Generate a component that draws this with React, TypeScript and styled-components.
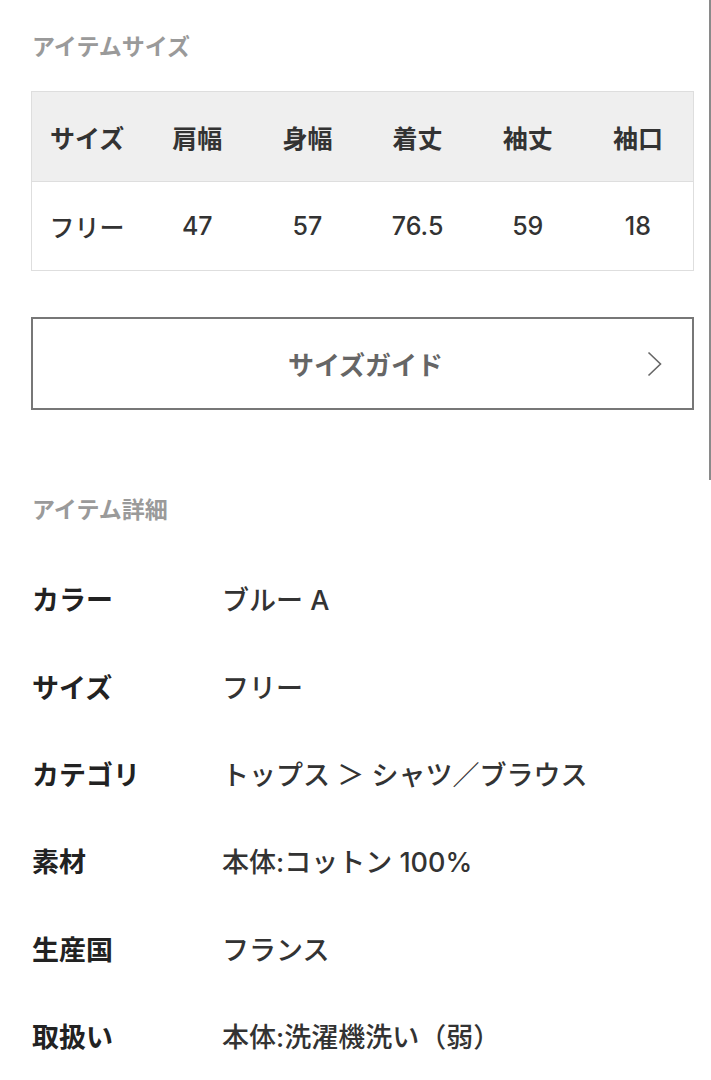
import React from 'react'
import styled, { createGlobalStyle } from 'styled-components'

const GlobalStyle = createGlobalStyle`
    body {
        margin: 0;
        background: #fff;
        font-family: Inter, "Noto Sans CJK JP", sans-serif;
        color: #333;
    }
`;

const sizeHeaders = ['サイズ', '肩幅', '身幅', '着丈', '袖丈', '袖口']
const sizeValues = ['フリー', '47', '57', '76.5', '59', '18']

const details = [
    { label: 'カラー', value: 'ブルー A' },
    { label: 'サイズ', value: 'フリー' },
    { label: 'カテゴリ', value: 'トップス ＞ シャツ／ブラウス' },
    { label: '素材', value: '本体:コットン 100%' },
    { label: '生産国', value: 'フランス' },
    { label: '取扱い', value: '本体:洗濯機洗い（弱）' },
]

const Chevron = () => (
    <svg width='15' height='26' viewBox='0 0 15 26' fill='none'>
        <polyline points='1.5,1.5 13.5,13 1.5,24.5' stroke='#666' strokeWidth='1.6' />
    </svg>
)

export default function App() {
    return (
        <Page>
            <GlobalStyle />
            <SizeSection>
                <SectionTitle>アイテムサイズ</SectionTitle>
                <SizeTable>
                    <SizeRow $head>
                        {sizeHeaders.map(h => <SizeCell key={h} $head>{h}</SizeCell>)}
                    </SizeRow>
                    <SizeRow>
                        {sizeValues.map(v => <SizeCell key={v}>{v}</SizeCell>)}
                    </SizeRow>
                </SizeTable>
                <GuideButton>
                    <span />
                    <GuideLabel>サイズガイド</GuideLabel>
                    <ChevronWrap><Chevron /></ChevronWrap>
                </GuideButton>
            </SizeSection>
            <DetailSection>
                <SectionTitle>アイテム詳細</SectionTitle>
                <DetailList>
                    {details.map(d => (
                        <DetailRow key={d.label}>
                            <DetailLabel>{d.label}</DetailLabel>
                            <DetailValue>{d.value}</DetailValue>
                        </DetailRow>
                    ))}
                </DetailList>
            </DetailSection>
        </Page>
    );
}

const Page = styled.div`
    width: 711px;
    box-sizing: border-box;
`;

const SizeSection = styled.section`
    padding: 35px 15px 70px 31px;
    border-right: 2px solid #8a8a8a;
`;

const SectionTitle = styled.h2`
    margin: 0;
    padding-left: 1px;
    font-size: 23px;
    line-height: 24px;
    font-weight: 700;
    color: #9a9a9a;
`;

const SizeTable = styled.div`
    margin-top: 32px;
    border: 1px solid #dedede;
`;

const SizeRow = styled.div<{ $head?: boolean }>`
    display: grid;
    grid-template-columns: repeat(6, 1fr);
    height: ${p => (p.$head ? '89px' : '88px')};
    background: ${p => (p.$head ? '#efefef' : '#fff')};
    border-bottom: ${p => (p.$head ? '1px solid #dedede' : 'none')};
`;

const SizeCell = styled.div<{ $head?: boolean }>`
    display: flex;
    align-items: center;
    justify-content: center;
    font-size: 25px;
    font-weight: ${p => (p.$head ? 600 : 500)};
    color: #333;
`;

const GuideButton = styled.div`
    margin-top: 46px;
    height: 93px;
    box-sizing: border-box;
    border: 2px solid #777;
    display: grid;
    grid-template-columns: 1fr auto 1fr;
    align-items: center;
`;

const GuideLabel = styled.span`
    font-size: 26px;
    font-weight: 700;
    color: #666;
    padding-left: 6px;
`;

const ChevronWrap = styled.span`
    justify-self: end;
    padding-right: 30px;
    display: flex;
`;

const DetailSection = styled.section`
    padding: 18px 17px 0 31px;
`;

const DetailList = styled.div`
    margin-top: 33px;
`;

const DetailRow = styled.div`
    display: grid;
    grid-template-columns: 191px 1fr;
    align-items: center;
    height: 87.4px;
`;

const DetailLabel = styled.div`
    font-size: 27px;
    font-weight: 700;
    color: #222;
    padding-left: 1px;
`;

const DetailValue = styled.div`
    font-size: 27px;
    font-weight: 500;
    color: #333;
`;
